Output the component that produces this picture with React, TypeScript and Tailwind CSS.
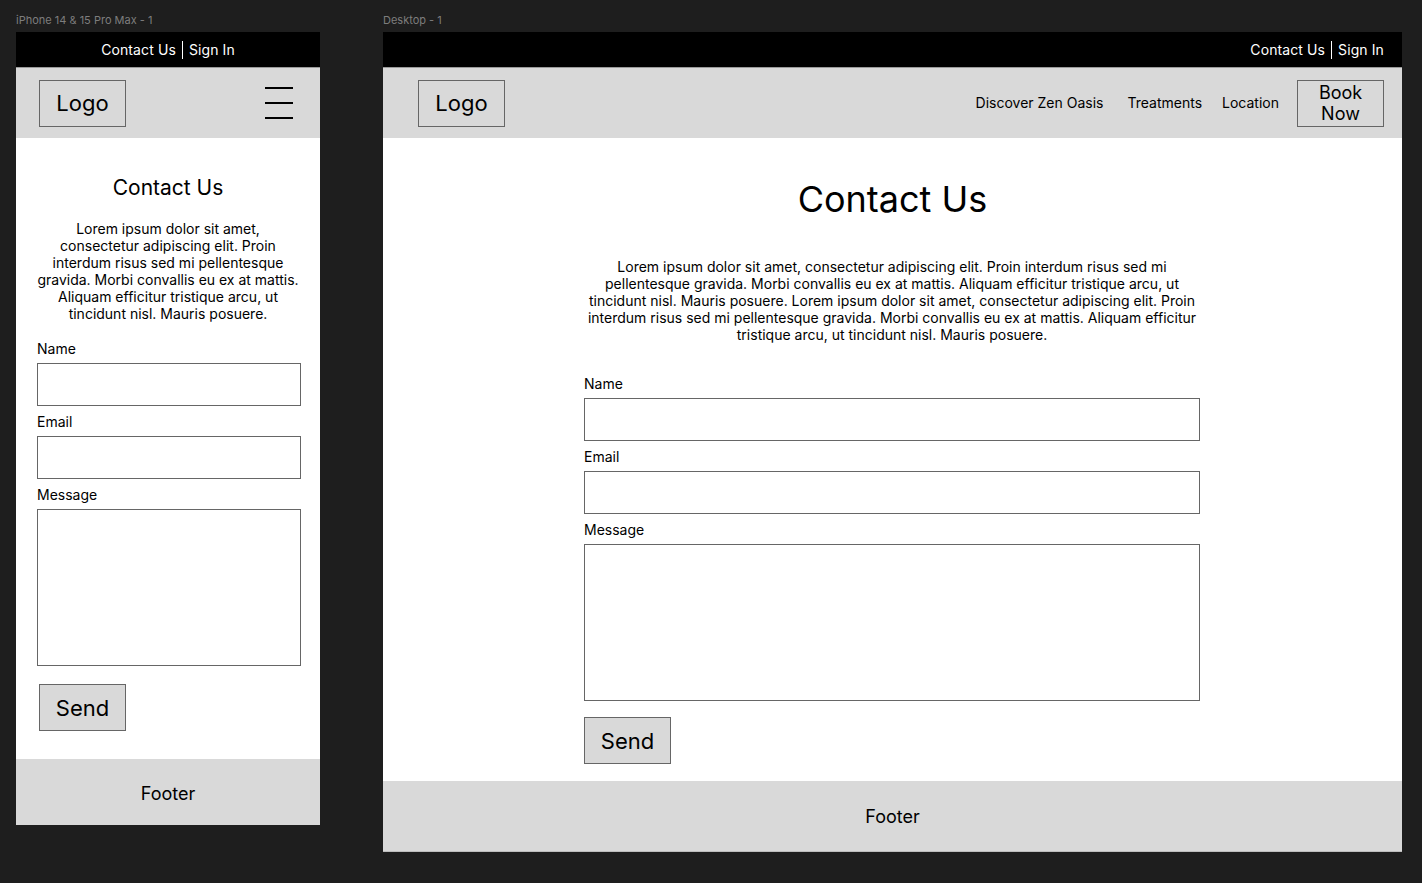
const LOREM_SHORT =
  'Lorem ipsum dolor sit amet, consectetur adipiscing elit. Proin interdum risus sed mi pellentesque gravida. Morbi convallis eu ex at mattis. Aliquam efficitur tristique arcu, ut tincidunt nisl. Mauris posuere.'

const LOREM_LONG = LOREM_SHORT + ' ' + LOREM_SHORT

function TopBar({ align }: { align: 'center' | 'right' }) {
  return (
    <div
      className={`h-[35px] bg-black flex items-center text-white text-[14px] tracking-[0.1px] ${
        align === 'center' ? 'justify-center' : 'justify-end pr-[18px]'
      }`}
    >
      <span>Contact Us</span>
      <span className="mx-[6px] h-[18px] w-px bg-white" />
      <span>Sign In</span>
    </div>
  )
}

function Field({ label, tall }: { label: string; tall?: boolean }) {
  return (
    <div className="flex flex-col">
      <label className="text-[14px] leading-[17px]">{label}</label>
      <div
        className={`mt-[6px] w-full border border-[#666] bg-white ${tall ? 'h-[157px]' : 'h-[43px]'}`}
      />
    </div>
  )
}

function SendButton() {
  return (
    <button className="w-[87px] h-[47px] bg-[#d9d9d9] border border-[#666] text-[22px] leading-none">
      Send
    </button>
  )
}

function Mobile() {
  return (
    <div className="w-[304px] flex flex-col">
      <TopBar align="center" />
      <div className="h-[71px] bg-[#d9d9d9] flex items-center justify-between pl-[23px] pr-[27px] border-t border-[#9a9a9a]">
        <div className="w-[87px] h-[47px] border border-[#666] flex items-center justify-center text-[22px]">
          Logo
        </div>
        <div className="w-[28px] flex flex-col gap-[13px]">
          <span className="h-[2px] bg-black" />
          <span className="h-[2px] bg-black" />
          <span className="h-[2px] bg-black" />
        </div>
      </div>
      <main className="bg-white pt-[38px] pb-[28px]">
        <h2 className="text-center text-[21px] leading-[24px]">Contact Us</h2>
        <p className="mt-[20px] mx-[20px] text-center text-[14px] leading-[17px]">{LOREM_SHORT}</p>
        <div className="mt-[18px] ml-[21px] w-[264px] flex flex-col gap-[7px]">
          <Field label="Name" />
          <Field label="Email" />
          <Field label="Message" tall />
        </div>
        <div className="mt-[18px] ml-[23px]">
          <SendButton />
        </div>
      </main>
      <footer className="h-[66px] bg-[#d9d9d9] flex items-center justify-center pt-[3px] text-[18px]">
        Footer
      </footer>
    </div>
  )
}

function Desktop() {
  return (
    <div className="w-[1019px] flex flex-col">
      <TopBar align="right" />
      <div className="h-[71px] bg-[#d9d9d9] flex items-center pl-[35px] pr-[18px] border-t border-[#9a9a9a]">
        <div className="w-[87px] h-[47px] border border-[#666] flex items-center justify-center text-[22px]">
          Logo
        </div>
        <nav className="ml-auto flex items-center text-[14px]">
          <a className="mr-[24px] -mt-[2px]">Discover Zen Oasis</a>
          <a className="mr-[20px] -mt-[2px]">Treatments</a>
          <a className="mr-[18px] -mt-[2px]">Location</a>
          <div className="w-[87px] h-[47px] border border-[#666] flex items-center justify-center text-center text-[18px] leading-[21px]">
            Book
            <br />
            Now
          </div>
        </nav>
      </div>
      <main className="bg-white pt-[39px] pb-[17px]">
        <h1 className="text-center text-[36px] leading-[44px]">Contact Us</h1>
        <div className="ml-[201px] w-[616px]">
          <p className="mt-[37px] text-center text-[14px] leading-[17px]">{LOREM_LONG}</p>
          <div className="mt-[32px] flex flex-col gap-[7px]">
            <Field label="Name" />
            <Field label="Email" />
            <Field label="Message" tall />
          </div>
          <div className="mt-[16px]">
            <SendButton />
          </div>
        </div>
      </main>
      <footer className="h-[71px] bg-[#d9d9d9] flex items-center justify-center text-[18px] border-b border-[#bdbdbd]">
        Footer
      </footer>
    </div>
  )
}

export default function App() {
  return (
    <div
      className="min-h-screen bg-[#1e1e1e] flex gap-[63px] pl-[16px] pt-[8px] text-black"
      style={{ fontFamily: 'Inter, "Noto Sans", sans-serif' }}
    >
      <div className="flex flex-col">
        <div className="h-[24px] flex items-center text-[11px] text-[#7d7d7d]">iPhone 14 &amp; 15 Pro Max - 1</div>
        <Mobile />
      </div>
      <div className="flex flex-col">
        <div className="h-[24px] flex items-center text-[11px] text-[#7d7d7d]">Desktop - 1</div>
        <Desktop />
      </div>
    </div>
  )
}
